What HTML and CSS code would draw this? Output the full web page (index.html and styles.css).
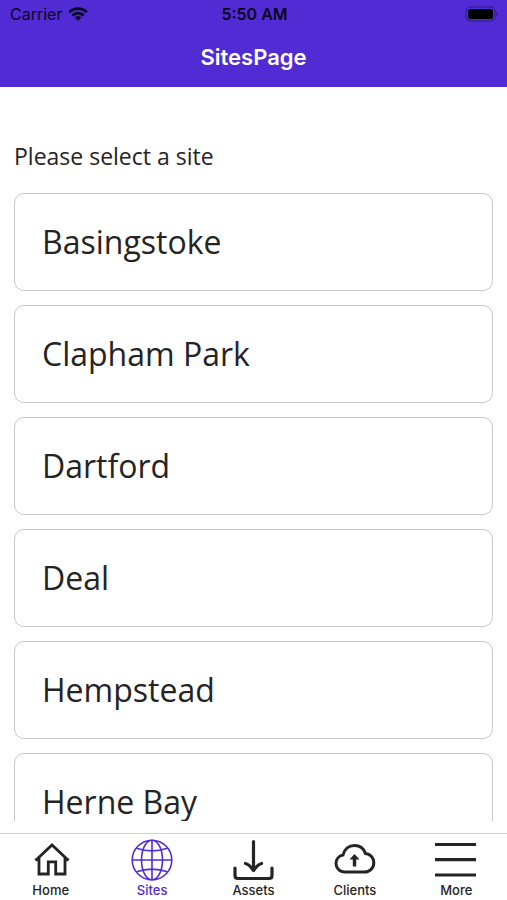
FILE: index.html
```html
<!DOCTYPE html>
<html lang="en">
<head>
<meta charset="utf-8">
<meta name="viewport" content="width=device-width, initial-scale=1">
<title>SitesPage</title>
<link rel="stylesheet" href="styles.css">
</head>
<body>
<header class="header">
  <div class="status">
    <div class="carrier">
      <span>Carrier</span>
      <svg class="wifi" viewBox="0 0 20 14" aria-hidden="true">
        <path d="M1.2 5.2a12.6 12.6 0 0 1 17.6 0M4.3 8.5a8.2 8.2 0 0 1 11.4 0" fill="none" stroke="currentColor" stroke-width="2.7"/>
        <path d="M10 13.8 6.6 10.6a5 5 0 0 1 6.8 0z" fill="currentColor"/>
      </svg>
    </div>
    <span class="time">5:50 AM</span>
    <svg class="battery" viewBox="0 0 34 16" aria-hidden="true">
      <rect x="1" y="1" width="29" height="14" rx="4.5" fill="none" stroke="currentColor" stroke-opacity=".4"/>
      <rect x="3" y="3" width="25" height="10" rx="2.5" fill="currentColor"/>
      <path d="M31.5 5.8c1.8.8 1.8 3.6 0 4.4z" fill="currentColor" fill-opacity=".4"/>
    </svg>
  </div>
  <h1 class="title">SitesPage</h1>
</header>
<main class="content">
  <p class="prompt">Please select a site</p>
  <div class="sites">
    <button class="site" type="button">Basingstoke</button>
    <button class="site" type="button">Clapham Park</button>
    <button class="site" type="button">Dartford</button>
    <button class="site" type="button">Deal</button>
    <button class="site" type="button">Hempstead</button>
    <button class="site" type="button">Herne Bay</button>
  </div>
</main>
<nav class="tabs">
  <a class="tab" href="#home">
    <svg class="icon" viewBox="0 0 42 42" aria-hidden="true">
      <path d="M5.500 21.500 22 6 38.500 21.500M5.500 20.500H9V35H18.300V22.800H25.700V35H35V20.500H38.500" fill="none" stroke="currentColor" stroke-width="2.800"/>
    </svg>
    <span>Home</span>
  </a>
  <a class="tab active" href="#sites" aria-current="page">
    <svg class="icon" viewBox="0 0 42 42" aria-hidden="true">
      <g fill="none" stroke="currentColor" stroke-width="1.600">
        <circle cx="21" cy="21" r="19.800"/>
        <ellipse cx="21" cy="21" rx="10.500" ry="19.800"/>
        <path d="M21 1.200v39.600M1.200 21h39.600M5.500 9.200Q21 14.500 36.500 9.200M5.500 32.800Q21 27.500 36.500 32.800"/>
      </g>
    </svg>
    <span>Sites</span>
  </a>
  <a class="tab" href="#assets">
    <svg class="icon" viewBox="0 0 42 42" aria-hidden="true">
      <g fill="none" stroke="currentColor" stroke-width="3.200" stroke-linecap="round" stroke-linejoin="round">
        <path d="M20.500 2.500v29M12.500 24.500c4 1 6 4 8 7 2-3 4-6 8-7"/>
        <path d="M2 29v7.500q0 3 3 3h31q3 0 3-3V29"/>
      </g>
    </svg>
    <span>Assets</span>
  </a>
  <a class="tab" href="#clients">
    <svg class="icon" viewBox="0 0 42 42" aria-hidden="true">
      <path d="M11 33C5.500 33 2 29 2 24.500c0-4.500 3-7.700 7-8.500C10.500 10 15 6.500 20.500 6.500c5.500 0 9.300 3 11 8 5 .5 8.300 4.500 8.300 9.200 0 5.300-4 9.300-9.300 9.300z" fill="none" stroke="currentColor" stroke-width="3"/>
      <path d="m20.500 15 5 5.500h-3.300v7h-3.400v-7h-3.300z" fill="currentColor"/>
    </svg>
    <span>Clients</span>
  </a>
  <a class="tab" href="#more">
    <svg class="icon" viewBox="0 0 42 42" aria-hidden="true">
      <path d="M0 5.500h41M0 20.700h41M0 36h41" stroke="currentColor" stroke-width="3.200"/>
    </svg>
    <span>More</span>
  </a>
</nav>
</body>
</html>
```
FILE: styles.css
```css
* {
  box-sizing: border-box;
}

body {
  margin: 0;
  height: 100vh;
  display: flex;
  flex-direction: column;
  background: #fff;
  color: #242424;
  font-family: Inter, "Liberation Sans", sans-serif;
}

.header {
  background: #512bd4;
  color: #fff;
  padding-bottom: 16px;
}

.status {
  display: grid;
  grid-template-columns: 1fr auto 1fr;
  align-items: center;
  height: 28px;
  padding: 0 8px 0 10px;
  color: #0b0620;
  font-size: 16px;
}

.carrier {
  display: flex;
  align-items: center;
  gap: 6px;
}

.wifi {
  width: 20px;
  height: 14px;
}

.time {
  font-weight: 600;
}

.battery {
  width: 34px;
  height: 16px;
  justify-self: end;
  color: #000;
}

.title {
  margin: 0;
  padding-top: 15px;
  font-size: 22px;
  line-height: 28px;
  font-weight: 600;
  text-align: center;
}

.content {
  flex: 1;
  min-height: 0;
  overflow-y: auto;
  scrollbar-width: none;
  margin-bottom: 12px;
  padding: 53px 14px 0;
  font-family: "Open Sans", "Noto Sans", sans-serif;
}

.prompt {
  margin: 0 0 21px;
  font-size: 23px;
  line-height: 32px;
}

.sites {
  display: flex;
  flex-direction: column;
  gap: 14px;
}

.site {
  flex: none;
  height: 98px;
  padding: 0 27px 2px;
  border: 1px solid #c8c8c8;
  border-radius: 10px;
  background: #fff;
  color: inherit;
  font-family: inherit;
  font-size: 32px;
  text-align: left;
}

.tabs {
  display: flex;
  height: 67px;
  border-top: 1px solid #d0d0d0;
}

.tab {
  flex: 1;
  display: flex;
  flex-direction: column;
  align-items: center;
  padding-top: 5px;
  color: #242424;
  font-size: 13px;
  line-height: 18px;
  font-weight: 500;
  text-decoration: none;
}

.active {
  color: #512bd4;
}

.icon {
  width: 42px;
  height: 42px;
}
```
